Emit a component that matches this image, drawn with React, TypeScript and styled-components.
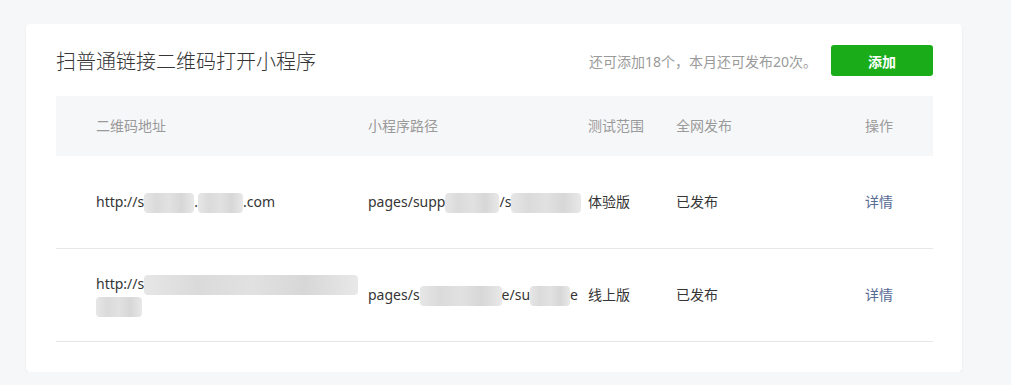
import React from "react";
import styled, { createGlobalStyle } from "styled-components";

const GlobalStyle = createGlobalStyle`
    body {
        margin: 0;
        background-color: #f6f7f9;
        font-family: "Noto Sans", "Noto Sans CJK SC", sans-serif;
    }
`;

const Card = styled.div`
    width: 936px;
    margin: 24px 0 0 26px;
    background-color: #ffffff;
    border-radius: 4px;
    box-shadow: 0 1px 2px rgba(0, 0, 0, 0.08);
    padding: 21px 29px 30px 30px;
    box-sizing: border-box;
`;

const TitleRow = styled.div`
    height: 31px;
    margin-bottom: 20px;
    display: flex;
    align-items: center;
    justify-content: space-between;
`;

const Title = styled.div`
    font-size: 20px;
    color: #353535;
    font-family: "Noto Sans CJK SC", sans-serif;
    font-weight: 300;
`;

const Actions = styled.div`
    display: flex;
    align-items: center;
    gap: 14px;
`;

const Hint = styled.span`
    font-size: 14px;
    color: #9a9a9a;
`;

const AddButton = styled.button`
    width: 102px;
    height: 31px;
    border: none;
    border-radius: 3px;
    background-color: #1aad19;
    color: #ffffff;
    font-size: 14px;
    font-weight: 600;
    font-family: "Noto Sans CJK SC", sans-serif;
    cursor: pointer;
`;

const columns = "312px 220px 88px 189px 1fr";

const HeadRow = styled.div`
    display: grid;
    grid-template-columns: ${columns};
    height: 60px;
    align-items: center;
    background-color: #f6f7f9;
    font-size: 14px;
    color: #9a9a9a;
`;

const Row = styled.div`
    display: grid;
    grid-template-columns: ${columns};
    height: 92px;
    align-items: center;
    border-bottom: 1px solid #e7e7eb;
    font-size: 14px;
    color: #353535;
`;

const Cell = styled.div<{ $first?: boolean }>`
    padding-left: ${({ $first }) => ($first ? "40px" : "0")};
    padding-right: 10px;
    white-space: nowrap;
    overflow: hidden;
    line-height: 22px;
`;

const Link = styled.a`
    color: #576b95;
    text-decoration: none;
    cursor: pointer;
`;

const Blur = styled.span<{ $w: number }>`
    display: inline-block;
    width: ${({ $w }) => $w}px;
    height: 20px;
    vertical-align: middle;
    border-radius: 4px;
    background: linear-gradient(
        90deg,
        #e2e2e2 0%,
        #d4d4d4 25%,
        #dcdcdc 50%,
        #d0d0d0 75%,
        #e4e4e4 100%
    );
    opacity: 0.85;
`;

const App = () => {
    return (
        <>
            <GlobalStyle />
            <Card>
                <TitleRow>
                    <Title>扫普通链接二维码打开小程序</Title>
                    <Actions>
                        <Hint>还可添加18个，本月还可发布20次。</Hint>
                        <AddButton>添加</AddButton>
                    </Actions>
                </TitleRow>
                <HeadRow>
                    <Cell $first>二维码地址</Cell>
                    <Cell>小程序路径</Cell>
                    <Cell>测试范围</Cell>
                    <Cell>全网发布</Cell>
                    <Cell>操作</Cell>
                </HeadRow>
                <Row>
                    <Cell $first>
                        http://s<Blur $w={50} />.<Blur $w={45} />.com
                    </Cell>
                    <Cell>
                        pages/supp<Blur $w={54} />/s<Blur $w={70} />
                    </Cell>
                    <Cell>体验版</Cell>
                    <Cell>已发布</Cell>
                    <Cell>
                        <Link>详情</Link>
                    </Cell>
                </Row>
                <Row>
                    <Cell $first>
                        http://s<Blur $w={214} />
                        <br />
                        <Blur $w={46} />
                    </Cell>
                    <Cell>
                        pages/s<Blur $w={82} />e/su<Blur $w={40} />e
                    </Cell>
                    <Cell>线上版</Cell>
                    <Cell>已发布</Cell>
                    <Cell>
                        <Link>详情</Link>
                    </Cell>
                </Row>
            </Card>
        </>
    );
};

export default App;
